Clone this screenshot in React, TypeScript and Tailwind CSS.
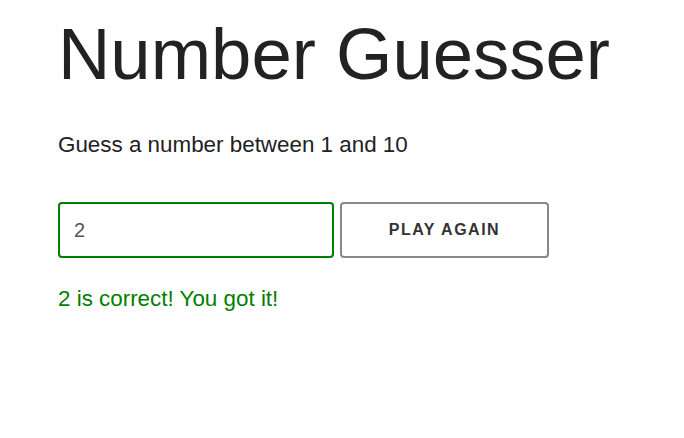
export default function App() {
  return (
    <div className="w-[684px] h-[438px] bg-white pl-[58px] pt-[18px]" style={{ fontFamily: '"Liberation Sans", Arial, sans-serif' }}>
      <h1 className="text-[72.5px] leading-[72px] text-[#222222] font-normal">Number Guesser</h1>
      <p className="mt-[44px] text-[22.4px] leading-[22px] text-[#222222]">Guess a number between 1 and 10</p>
      <div className="mt-[46px] flex gap-[6px]">
        <input
          type="text"
          defaultValue="2"
          className="w-[276px] h-[56px] border-2 border-[#008000] rounded-[4px] pl-[14px] text-[20px] text-[#555555] outline-none"
          style={{ fontFamily: '"Liberation Sans", Arial, sans-serif' }}
        />
        <button
          className="w-[209px] h-[56px] border-2 border-[#888888] rounded-[4px] bg-white text-[16px] font-bold tracking-[1.5px] text-[#333333]"
          style={{ fontFamily: '"Liberation Sans", Arial, sans-serif' }}
        >
          PLAY AGAIN
        </button>
      </div>
      <p className="mt-[30px] text-[22.4px] leading-[22px] text-[#008000]">2 is correct! You got it!</p>
    </div>
  );
}
